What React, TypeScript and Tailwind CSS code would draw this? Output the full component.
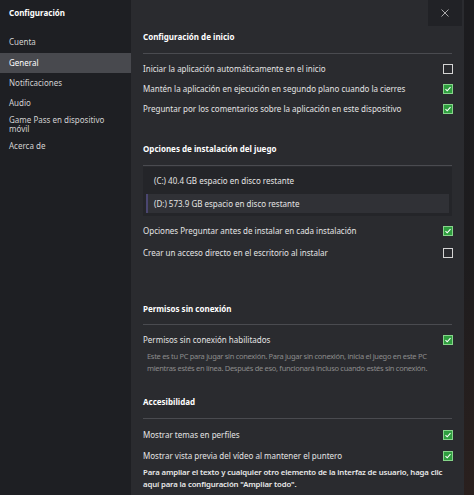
import React from 'react';

const Check = ({ on }: { on: boolean }) =>
  on ? (
    <div className="w-[10px] h-[10px] bg-[#2f9e3f] border border-[#86d48a] flex items-center justify-center">
      <svg width="8" height="8" viewBox="0 0 8 8" fill="none">
        <path d="M1.5 4.2 L3.2 5.8 L6.5 2.2" stroke="#ffffff" strokeWidth="1.1" />
      </svg>
    </div>
  ) : (
    <div className="w-[10px] h-[10px] border border-[#d4d4d4]" />
  );

const Row = ({ label, on, h = 'h-[20px]' }: { label: string; on: boolean; h?: string }) => (
  <div className={`${h} flex items-center justify-between pr-[11px]`}>
    <span className="text-[#e4e4e4]">{label}</span>
    <Check on={on} />
  </div>
);

const Heading = ({ children }: { children: React.ReactNode }) => (
  <div className="h-[16px] flex items-center font-bold text-white">{children}</div>
);

const Divider = ({ mt = 'mt-[8px]' }: { mt?: string }) => (
  <div className={`${mt} h-[1px] bg-[#4a4b50] mr-[12px]`} />
);

export default function App() {
  return (
    <div
      className="w-[474px] h-[495px] flex overflow-hidden text-[8px] leading-none"
      style={{ fontFamily: '"Noto Sans", "Open Sans", sans-serif' }}
    >
      {/* sidebar */}
      <div className="w-[131px] bg-[#1e1f23] flex flex-col text-[#d2d2d2]">
        <div className="h-[31px] pl-[9px] pt-[9px] font-bold text-white">Configuración</div>
        <div className="h-[22px] flex items-center pl-[9px]">Cuenta</div>
        <div className="h-[20px] flex items-center pl-[9px] bg-[#48494e] text-white">General</div>
        <div className="h-[20px] flex items-center pl-[9px]">Notificaciones</div>
        <div className="h-[20px] flex items-center pl-[9px]">Audio</div>
        <div className="h-[22px] flex flex-col justify-center pl-[9px] leading-[9.5px]">
          <span>Game Pass en dispositivo</span>
          <span>móvil</span>
        </div>
        <div className="h-[22px] flex items-center pl-[9px]">Acerca de</div>
      </div>

      {/* main panel */}
      <div className="w-[333px] bg-[#2a2b2f] flex flex-col pl-[12px] relative">
        <div className="absolute top-0 right-[2px] w-[34px] h-[26px] bg-[#212226] flex items-center justify-center">
          <svg width="8" height="8" viewBox="0 0 8 8">
            <path d="M0.5 0.5 L7.5 7.5 M7.5 0.5 L0.5 7.5" stroke="#b8b8b8" strokeWidth="0.9" />
          </svg>
        </div>

        <div className="mt-[29px]">
          <Heading>Configuración de inicio</Heading>
          <Divider />
          <div className="mt-[5px]">
            <Row label="Iniciar la aplicación automáticamente en el inicio" on={false} />
            <Row label="Mantén la aplicación en ejecución en segundo plano cuando la cierres" on />
            <Row label="Preguntar por los comentarios sobre la aplicación en este dispositivo" on />
          </div>
        </div>

        <div className="mt-[22px]">
          <Heading>Opciones de instalación del juego</Heading>
          <Divider />
          <div className="mt-[1px] mr-[12px] h-[49px] bg-[#242529] pt-[3px] px-[3px] flex flex-col gap-[2px]">
            <div className="h-[22px] flex items-center pl-[8px] text-[#e4e4e4]">(C:) 40.4 GB espacio en disco restante</div>
            <div className="h-[19px] flex items-center pl-[6px] bg-[#303136] text-[#e4e4e4] border-l-2 border-[#4a4670]">
              (D:) 573.9 GB espacio en disco restante
            </div>
          </div>
          <div className="mt-[4px]">
            <Row label="Opciones Preguntar antes de instalar en cada instalación" on h="h-[22px]" />
            <Row label="Crear un acceso directo en el escritorio al instalar" on={false} h="h-[22px]" />
          </div>
        </div>

        <div className="mt-[37px]">
          <Heading>Permisos sin conexión</Heading>
          <Divider mt="mt-[7px]" />
          <div className="mt-[5px]">
            <Row label="Permisos sin conexión habilitados" on />
            <div className="pl-[4px] text-[7.5px] tracking-[-0.3px] text-[#8c8c8c] leading-[12px] whitespace-nowrap">
              Este es tu PC para jugar sin conexión. Para jugar sin conexión, inicia el juego en este PC
              <br />
              mientras estés en línea. Después de eso, funcionará incluso cuando estés sin conexión.
            </div>
          </div>
        </div>

        <div className="mt-[20px]">
          <Heading>Accesibilidad</Heading>
          <Divider />
          <div className="mt-[5px]">
            <Row label="Mostrar temas en perfiles" on h="h-[21px]" />
            <Row label="Mostrar vista previa del vídeo al mantener el puntero" on h="h-[21px]" />
            <div className="text-[7.8px] tracking-[-0.14px] font-semibold text-[#e8e8e8] leading-[12px] whitespace-nowrap">
              Para ampliar el texto y cualquier otro elemento de la interfaz de usuario, haga clic
              <br />
              aquí para la configuración "Ampliar todo".
            </div>
          </div>
        </div>
      </div>

      {/* right strip */}
      <div className="flex-1 bg-gradient-to-b from-[#1c1c1f] via-[#1d1c1e] to-[#2a201e]" />
    </div>
  );
}
